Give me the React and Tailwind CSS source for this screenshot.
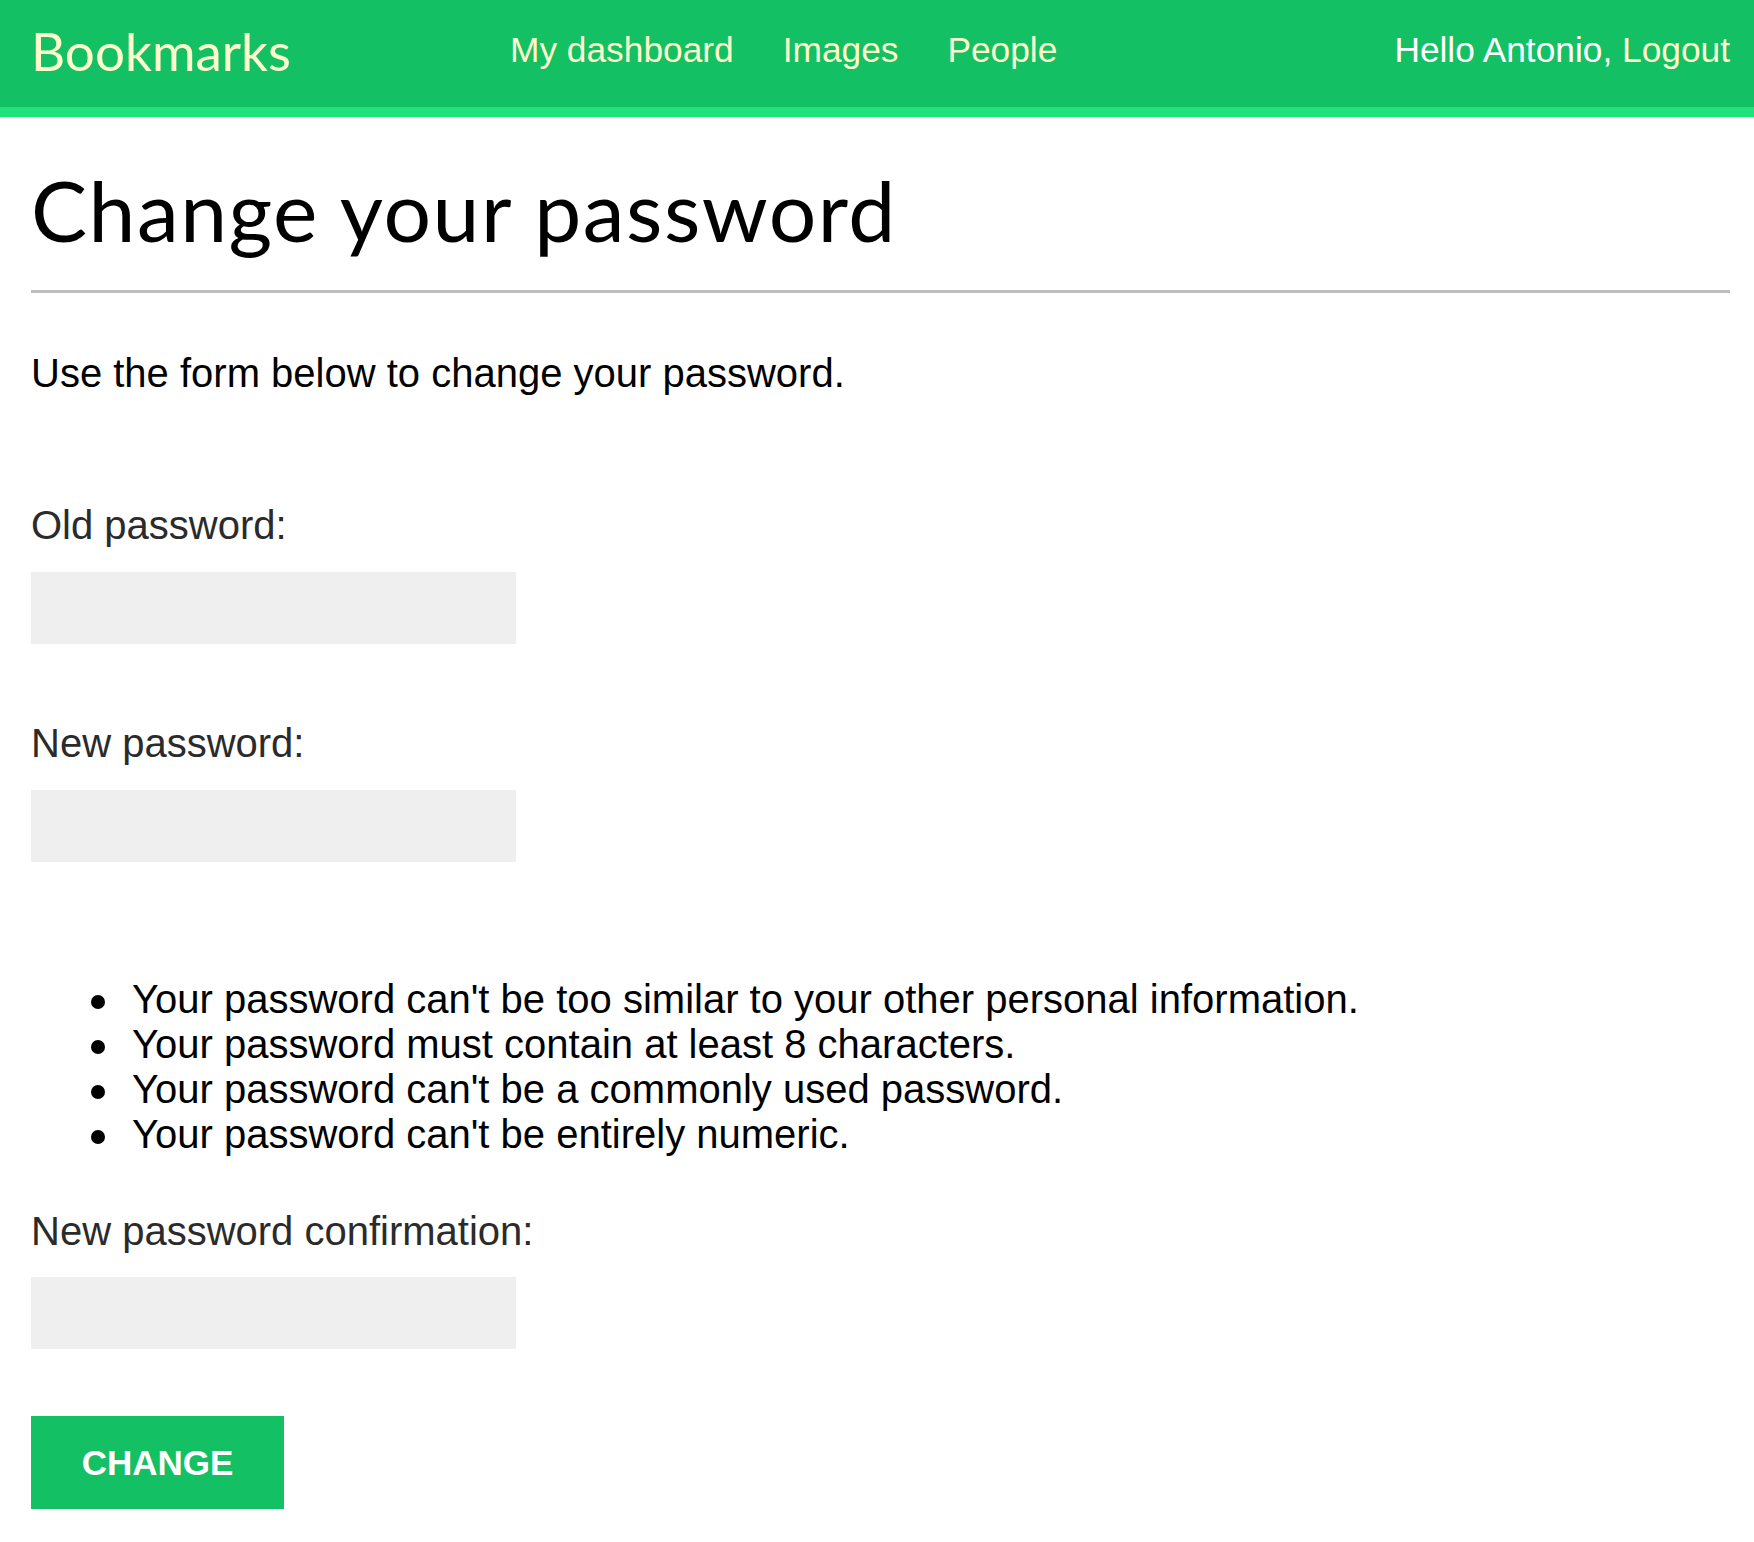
export default function App() {
  const sans = "font-['Liberation_Sans',Arial,sans-serif]";
  const rules = [
    "Your password can't be too similar to your other personal information.",
    "Your password must contain at least 8 characters.",
    "Your password can't be a commonly used password.",
    "Your password can't be entirely numeric.",
  ];
  return (
    <div className="min-h-[1542px] bg-white">
      <header className="flex items-start h-[117px] bg-[#13c064] border-b-[10px] border-[#1fe27b] pl-[31px] pr-[24px]">
        <div className="w-[479px] pt-[21px]">
          <span className="font-['Lato',sans-serif] text-[53px] leading-[60px] text-[#fdfbcb]">Bookmarks</span>
        </div>
        <nav className={`flex gap-[49px] pt-[30px] text-[35.3px] leading-[40px] text-[#fdfbcb] ${sans}`}>
          <a>My dashboard</a>
          <a>Images</a>
          <a>People</a>
        </nav>
        <div className={`ml-auto pt-[30px] text-[35.3px] leading-[40px] ${sans}`}>
          <span className="text-white">Hello Antonio, </span>
          <span className="text-[#fdfbcb]">Logout</span>
        </div>
      </header>
      <main className="pl-[31px] pr-[24px]">
        <h1 className="mt-[43px] font-['Lato',sans-serif] text-[84px] leading-[100px] tracking-[1.5px] text-black">Change your password</h1>
        <div className="mt-[30px] border-t-[3px] border-[#bdbdbd]"></div>
        <p className={`mt-[56px] text-[40px] leading-[48px] text-black ${sans}`}>Use the form below to change your password.</p>
        <form className={`${sans}`}>
          <label className="block mt-[104px] text-[40px] leading-[48px] text-[#2b2b2b]">Old password:</label>
          <div className="mt-[23px] w-[485px] h-[72px] bg-[#efefef]"></div>
          <label className="block mt-[75px] text-[40px] leading-[48px] text-[#2b2b2b]">New password:</label>
          <div className="mt-[23px] w-[485px] h-[72px] bg-[#efefef]"></div>
          <ul className="mt-[115px] pl-[60px] text-[40px] leading-[45px] text-black">
            {rules.map((r) => (
              <li key={r} className="flex items-start">
                <span className="shrink-0 w-[14px] h-[14px] mt-[18px] mr-[27px] rounded-full bg-black"></span>
                <span>{r}</span>
              </li>
            ))}
          </ul>
          <label className="block mt-[50px] text-[40px] leading-[48px] text-[#2b2b2b]">New password confirmation:</label>
          <div className="mt-[22px] w-[485px] h-[72px] bg-[#efefef]"></div>
          <button type="button" className="mt-[67px] flex items-center justify-center w-[253px] h-[93px] bg-[#13c064] text-white font-bold text-[35px] leading-none">
            CHANGE
          </button>
        </form>
      </main>
    </div>
  );
}
